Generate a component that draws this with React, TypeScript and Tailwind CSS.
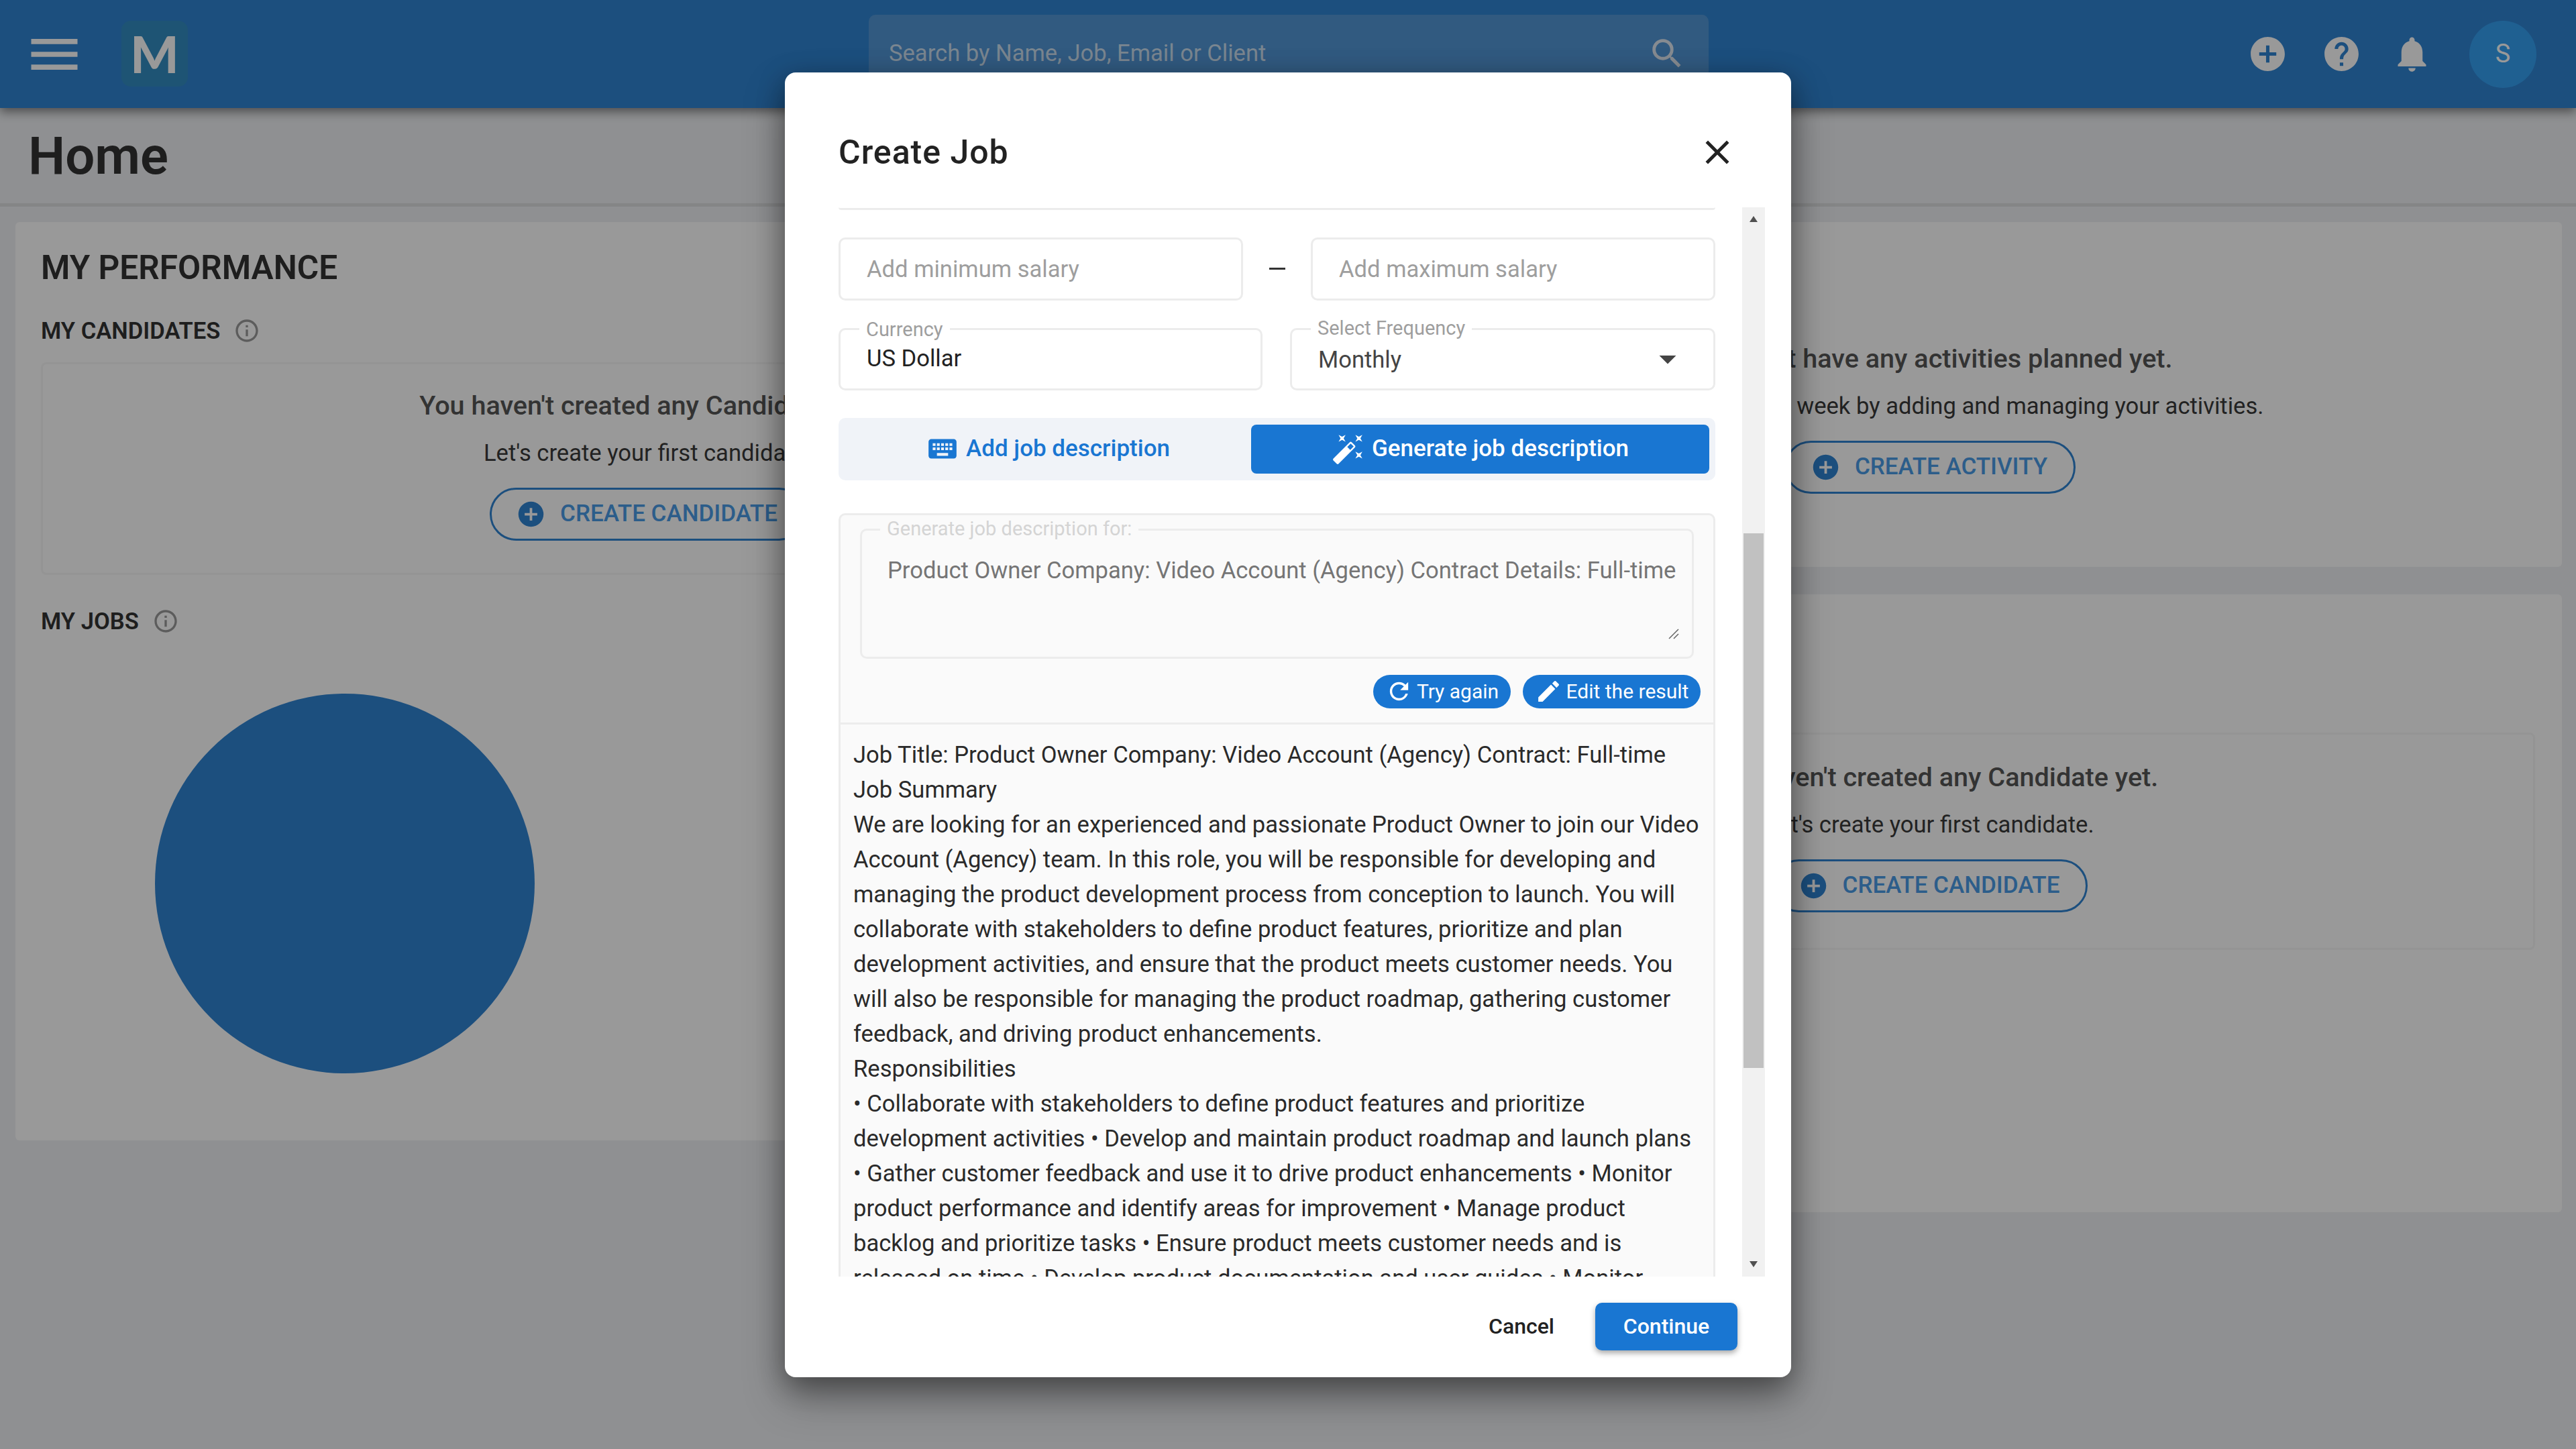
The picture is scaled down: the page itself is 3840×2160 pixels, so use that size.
import {
  MdAddCircle,
  MdArrowDropDown,
  MdAutoFixHigh,
  MdClose,
  MdEdit,
  MdHelp,
  MdInfoOutline,
  MdKeyboard,
  MdMenu,
  MdNotifications,
  MdRefresh,
  MdSearch,
} from "react-icons/md";

function OutlineButton({ label }: { label: string }) {
  return (
    <button className="flex items-center gap-[21px] h-[79px] pl-[36px] pr-[39px] rounded-full border-[3px] border-[#3084d3] text-[#4a9be6] text-[35px] font-medium uppercase">
      <MdAddCircle size={45} className="text-[#3084d3]" />
      {label}
    </button>
  );
}

function EmptyState({ title, text, action }: { title: string; text: string; action: string }) {
  return (
    <div className="flex flex-col items-center">
      <h3 className="text-[39.6px] leading-[48px] font-medium text-[#555]">{title}</h3>
      <p className="mt-[24px] text-[34.6px] leading-[44px] text-[#3a3a3a]">{text}</p>
      <div className="mt-[30px]">
        <OutlineButton label={action} />
      </div>
    </div>
  );
}

function SectionLabel({ label }: { label: string }) {
  return (
    <div className="flex items-center gap-[20px] text-[34.6px] leading-[44px] font-semibold text-[#333]">
      {label}
      <MdInfoOutline size={40} className="text-[#9a9a9a]" />
    </div>
  );
}

function TopBar() {
  return (
    <header className="relative z-10 flex h-[161px] bg-[#3084d3] shadow-[0_6px_14px_rgba(0,0,0,0.45)] pl-[35px] pr-[59px]">
      <div className="flex items-center gap-[54px]">
        <MdMenu size={92} className="text-white" />
        <div className="flex items-center justify-center w-[99px] h-[98px] -mt-[2px] rounded-[14px] bg-[#338cc1] text-white text-[76px] leading-none font-black font-[Lato,sans-serif]">
          M
        </div>
      </div>
      <div className="flex items-center justify-between ml-[1015px] mt-[22px] w-[1252px] h-[116px] px-[30px] rounded-[10px] bg-[#5296d5]">
        <span className="text-[34.6px] text-[#cbdff0]">Search by Name, Job, Email or Client</span>
        <MdSearch size={58} className="text-[#dfe8f2] mr-[3px]" />
      </div>
      <div className="flex items-center ml-auto">
        <MdAddCircle size={61} className="text-white" />
        <MdHelp size={61} className="text-white ml-[49px]" />
        <MdNotifications size={63} className="text-white ml-[43px]" />
        <div className="flex items-center justify-center w-[100px] h-[100px] ml-[54px] rounded-full bg-[#35a0f2] text-white text-[38px]">
          S
        </div>
      </div>
    </header>
  );
}

function Dashboard() {
  return (
    <main className="flex gap-[30px] pl-[23px] pr-[21px] pt-[23px]">
      <section className="w-[1882px] h-[1369px] rounded-[6px] bg-white pl-[38px] pt-[38px]">
        <h2 className="text-[49.6px] leading-[60px] font-semibold text-[#333]">MY PERFORMANCE</h2>
        <div className="mt-[42px]">
          <SectionLabel label="MY CANDIDATES" />
        </div>
        <div className="w-[1809px] h-[317px] mt-[25px] pt-[38px] rounded-[8px] border-[3px] border-[#f7f7f7]">
          <EmptyState
            title="You haven't created any Candidate yet."
            text="Let's create your first candidate."
            action="Create Candidate"
          />
        </div>
        <div className="mt-[47px]">
          <SectionLabel label="MY JOBS" />
        </div>
        <div className="w-[566px] h-[566px] mt-[86px] ml-[170px] rounded-full bg-[#3084d3]" />
      </section>
      <div className="flex flex-col gap-[41px] flex-1">
        <section className="h-[514px] rounded-[6px] bg-white pt-[180px]">
          <EmptyState
            title="You don't have any activities planned yet."
            text="Start planning your week by adding and managing your activities."
            action="Create Activity"
          />
        </section>
        <section className="h-[921px] rounded-[6px] bg-white pt-[206px] px-[40px]">
          <div className="h-[324px] pt-[40px] rounded-[8px] border-[3px] border-[#f7f7f7]">
            <EmptyState
              title="You haven't created any Candidate yet."
              text="Let's create your first candidate."
              action="Create Candidate"
            />
          </div>
        </section>
      </div>
    </main>
  );
}

function FloatingField({
  label,
  value,
  className,
  labelClass,
  valueClass,
  children,
}: {
  label: string;
  value: string;
  className: string;
  labelClass: string;
  valueClass: string;
  children?: React.ReactNode;
}) {
  return (
    <div className={`relative flex items-center justify-between h-[93px] rounded-[10px] border-[3px] border-[#ececec] ${className}`}>
      <span className={`absolute left-[28px] px-[10px] bg-white text-[29px] leading-[34px] text-[#9e9e9e] ${labelClass}`}>
        {label}
      </span>
      <span className={`text-[34.6px] ${valueClass}`}>{value}</span>
      {children}
    </div>
  );
}

function SalaryInput({ placeholder }: { placeholder: string }) {
  return (
    <input
      readOnly
      placeholder={placeholder}
      className="w-[603px] h-[94px] pl-[39px] rounded-[10px] border-[3px] border-[#ececec] text-[34.6px] outline-none placeholder:text-[#9e9e9e]"
    />
  );
}

function ScrollBar() {
  return (
    <div className="relative w-[34px] h-full bg-[#f1f1f1]">
      <div className="absolute top-[13px] left-[11px] w-0 h-0 border-x-[6px] border-x-transparent border-b-[9px] border-b-[#505050]" />
      <div className="absolute top-[486px] left-[2px] w-[30px] h-[797px] bg-[#c1c1c1]" />
      <div className="absolute bottom-[14px] left-[11px] w-0 h-0 border-x-[6px] border-x-transparent border-t-[9px] border-t-[#505050]" />
    </div>
  );
}

function CreateJobModal() {
  return (
    <div className="w-[1500px] h-[1945px] rounded-[16px] bg-white shadow-[0_30px_60px_rgba(0,0,0,0.35),0_10px_40px_rgba(0,0,0,0.3)]">
      <div className="flex items-center justify-between h-[201px] px-[80px] pt-[38px]">
        <h2 className="text-[50px] font-medium tracking-[1px] text-[#222]">Create Job</h2>
        <MdClose size={60} className="text-[#222]" />
      </div>

      <div className="flex gap-[40px] h-[1594px] pl-[80px]">
        <div className="w-[1307px] overflow-hidden">
          <div className="h-[4px] rounded-b-[8px] border-b-[3px] border-[#ececec]" />

          <div className="flex items-center justify-between mt-[41px]">
            <SalaryInput placeholder="Add minimum salary" />
            <span className="w-[24px] h-[3px] bg-[#333]" />
            <SalaryInput placeholder="Add maximum salary" />
          </div>

          <div className="flex justify-between mt-[41px]">
            <FloatingField
              label="Currency"
              value="US Dollar"
              className="w-[632px] pl-[39px]"
              labelClass="-top-[18px]"
              valueClass="text-[#222]"
            />
            <FloatingField
              label="Select Frequency"
              value="Monthly"
              className="w-[634px] pl-[39px] pr-[38px]"
              labelClass="-top-[20px]"
              valueClass="text-[#444] mt-[4px]"
            >
              <MdArrowDropDown size={60} className="text-[#444]" />
            </FloatingField>
          </div>

          <div className="flex items-center h-[93px] mt-[41px] px-[9px] rounded-[10px] bg-[#f0f3f8]">
            <div className="flex flex-1 items-center justify-center gap-[10px] text-[35px] font-medium text-[#1976d2]">
              <MdKeyboard size={50} />
              Add job description
            </div>
            <div className="flex items-center justify-center gap-[10px] w-[683px] h-[73px] rounded-[8px] bg-[#1976d2] text-[35px] font-medium text-white">
              <MdAutoFixHigh size={50} />
              Generate job description
            </div>
          </div>

          <div className="h-[1200px] mt-[49px] rounded-t-[10px] border-[3px] border-b-0 border-[#ececec] bg-[#fafafa]">
            <div className="pt-[20px] px-[29px]">
              <div className="relative h-[194px] pl-[38px] pt-[33px] rounded-[10px] border-[3px] border-[#ececec]">
                <span className="absolute -top-[20px] left-[27px] px-[10px] bg-[#fafafa] text-[29px] leading-[34px] text-[#d4d4d4]">
                  Generate job description for:
                </span>
                <textarea
                  readOnly
                  value="Product Owner Company: Video Account (Agency) Contract Details: Full-time"
                  className="block w-[1182px] h-[134px] bg-transparent text-[34.6px] leading-[52px] text-[#757575] outline-none resize-none"
                />
                <svg
                  viewBox="0 0 16 16"
                  className="absolute right-[19px] bottom-[26px] w-[16px] h-[16px] stroke-[#666] stroke-[1.5]"
                >
                  <path d="M1 15 L15 1 M8 15 L15 8" fill="none" />
                </svg>
              </div>
            </div>
            <div className="flex justify-end gap-[18px] mt-[24px] pr-[19px]">
              <button className="flex items-center justify-center gap-[6px] w-[205px] h-[50px] rounded-full bg-[#1976d2] text-[30px] text-white">
                <MdRefresh size={41} />
                Try again
              </button>
              <button className="flex items-center justify-center gap-[6px] w-[265px] h-[50px] rounded-full bg-[#1976d2] text-[30px] text-white">
                <MdEdit size={41} />
                Edit the result
              </button>
            </div>
            <div className="mt-[21px] border-b-[3px] border-[#ececec]" />
            <div className="pt-[19px] pl-[19px] pr-[17px] text-[34.6px] leading-[52px] text-[#2a2a2a]">
              <p>Job Title: Product Owner Company: Video Account (Agency) Contract: Full-time</p>
              <p>Job Summary</p>
              <p>
                We are looking for an experienced and passionate Product Owner to join our Video Account (Agency) team.
                In this role, you will be responsible for developing and managing the product development process from
                conception to launch. You will collaborate with stakeholders to define product features, prioritize and
                plan development activities, and ensure that the product meets customer needs. You will also be
                responsible for managing the product roadmap, gathering customer feedback, and driving product
                enhancements.
              </p>
              <p>Responsibilities</p>
              <p>
                • Collaborate with stakeholders to define product features and prioritize development activities •
                Develop and maintain product roadmap and launch plans • Gather customer feedback and use it to drive
                product enhancements • Monitor product performance and identify areas for improvement • Manage product
                backlog and prioritize tasks • Ensure product meets customer needs and is released on time • Develop
                product documentation and user guides • Monitor
              </p>
            </div>
          </div>
        </div>
        <ScrollBar />
      </div>

      <div className="flex justify-end items-center gap-[61px] pt-[39px] pr-[80px]">
        <button className="text-[32px] font-medium text-[#222]">Cancel</button>
        <button className="w-[212px] h-[71px] rounded-[10px] bg-[#1976d2] text-[32px] font-medium text-white shadow-[0_4px_8px_rgba(0,0,0,0.35)]">
          Continue
        </button>
      </div>
    </div>
  );
}

export default function App() {
  return (
    <div className="relative w-[3840px] h-[2160px] overflow-hidden bg-[#eef0f3] font-[Roboto,sans-serif]">
      <TopBar />
      <div className="flex items-center h-[147px] pl-[42px] border-b-[5px] border-[#dcdee0]">
        <h1 className="text-[78px] font-semibold text-[#333]">Home</h1>
      </div>
      <Dashboard />

      <div className="absolute inset-0 z-20 flex items-center justify-center bg-black/40">
        <CreateJobModal />
      </div>
    </div>
  );
}
